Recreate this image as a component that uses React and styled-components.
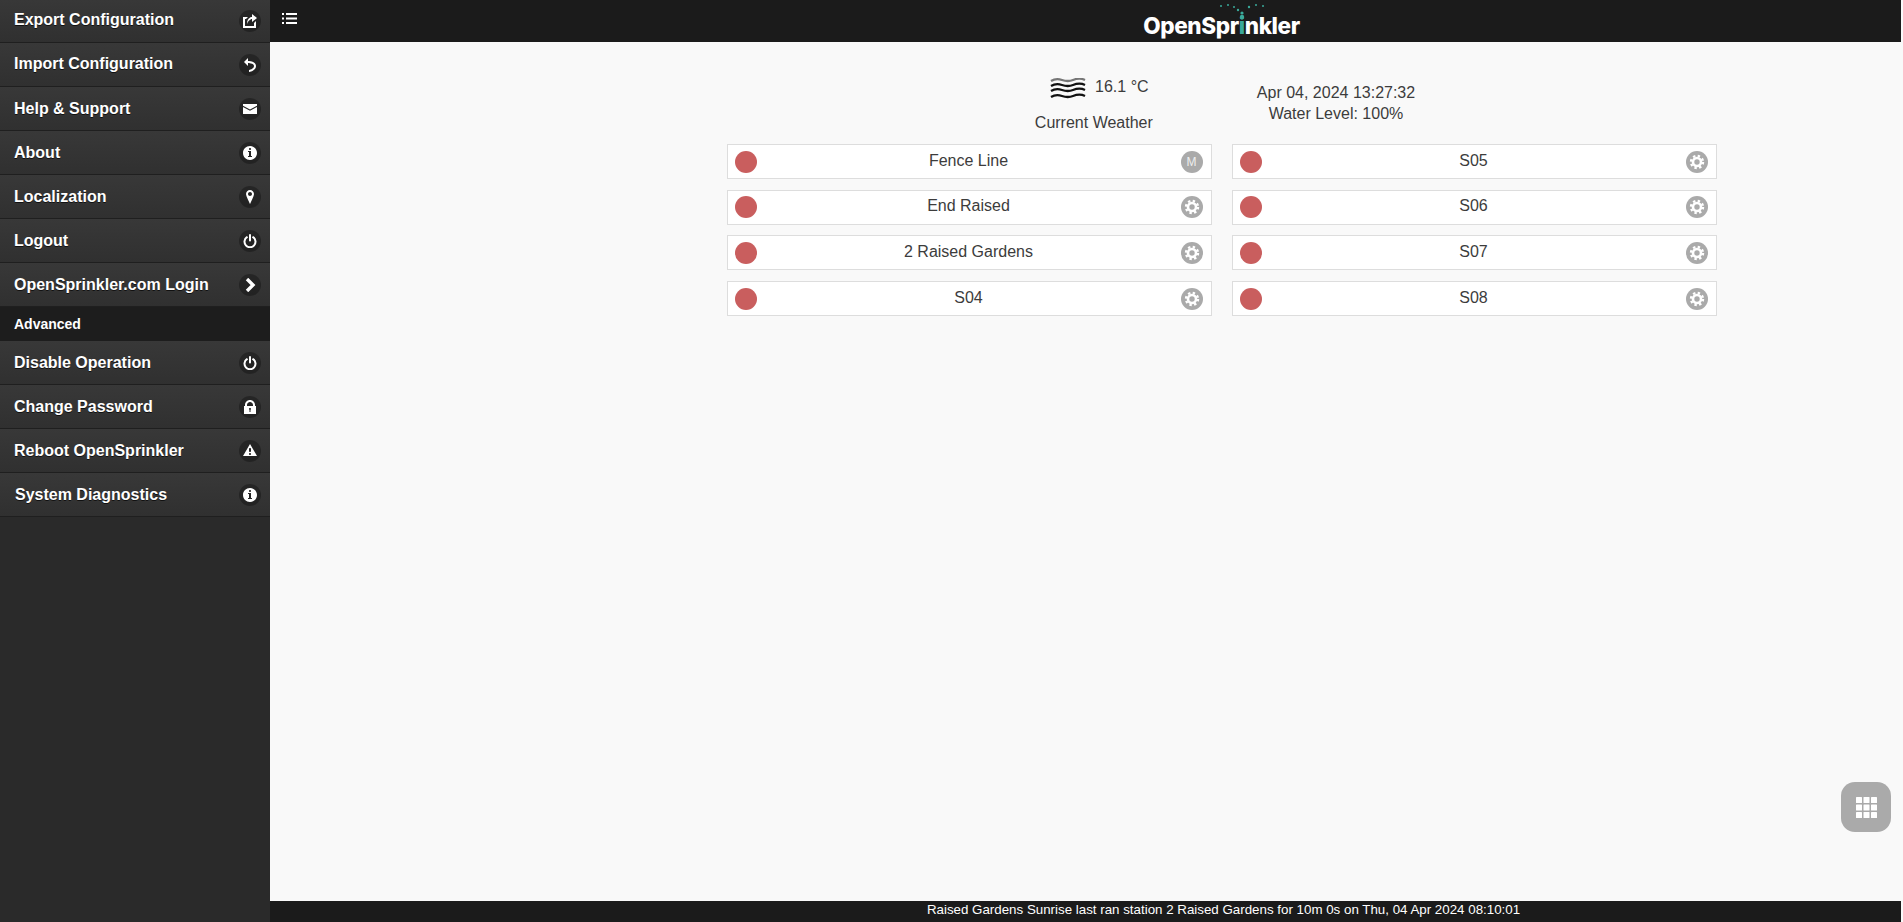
import React from "react";
import styled, { createGlobalStyle } from "styled-components";

const GlobalStyle = createGlobalStyle`
html, body {
    margin: 0;
    padding: 0;
    height: 100%;
    overflow: hidden;
    font-family: "Liberation Sans", Arial, sans-serif;
    background: #f9f9f9;
}
`;

// jQuery mobile style 14x14 glyphs
const glyphs = {
    action: <path d="M9 5v3l5-4-5-4v3S4 3 4 10c2-5 5-5 5-5zM11 12H2V5h1l2-2H0v11h13V7l-2 2v3z" />,
    back: <path d="M5 3V0L1 4l4 4V5s6 0 6 3-5 4-5 4v2s7-1 7-6c0-4-5-5-8-5z" />,
    mail: <path d="M0 3.75V2h14v1.75L7 7.5 0 3.75zM7 8.75 0 5v7h14V5L7 8.75z" />,
    info: <path d="M7 0C3.13 0 0 3.13 0 7s3.13 7 7 7 7-3.13 7-7-3.13-7-7-7zm0 2c.55 0 1 .45 1 1s-.45 1-1 1-1-.45-1-1 .45-1 1-1zm2 9H5v-1h1V6H5V5h3v5h1v1z" />,
    location: <path d="M7 0C4.79 0 3 1.79 3 4c0 2 4 10 4 10s4-8 4-10c0-2.21-1.79-4-4-4zm0 6c-1.1 0-2-.9-2-2s.9-2 2-2 2 .9 2 2-.9 2-2 2z" />,
    power: (
        <g fill="none" stroke="#fff" strokeWidth="2" strokeLinecap="round">
            <path d="M3.9 3.2a5.5 5.5 0 1 0 6.2 0" />
            <path d="M7 1v5.5" />
        </g>
    ),
    carat: <path fill="none" stroke="#fff" strokeWidth="3.4" d="M4 1 10 7l-6 6" />,
    lock: <path d="M12 6V5c0-2.76-2.24-5-5-5S2 2.24 2 5v1H1v8h12V6h-1zM7.5 9.85V12h-1V9.85C6.21 9.67 6 9.37 6 9c0-.55.45-1 1-1s1 .45 1 1c0 .37-.21.67-.5.85zM10 6H4V5c0-1.66 1.34-3 3-3s3 1.34 3 3v1z" />,
    alert: <path d="M7 0 0 12h14L7 0zm0 11c-.55 0-1-.45-1-1s.45-1 1-1 1 .45 1 1-.45 1-1 1zm0-3c-.55 0-1-.45-1-1V5c0-.55.45-1 1-1s1 .45 1 1v2c0 .55-.45 1-1 1z" />,
};

const Glyph = ({ name, size = 14 }) => (
    <svg width={size} height={size} viewBox="0 0 14 14" fill="#fff">
        {glyphs[name]}
    </svg>
);

const Gear = () => (
    <svg width="16" height="16" viewBox="0 0 16 16" fill="none" stroke="#fff">
        <circle cx="8" cy="8" r="4" strokeWidth="2.6" />
        <circle cx="8" cy="8" r="6" strokeWidth="2.4" strokeDasharray="2.36 2.35" />
    </svg>
);

const menuTop = [
    { label: "Export Configuration", icon: "action", lift: 1 },
    { label: "Import Configuration", icon: "back", lift: 1 },
    { label: "Help & Support", icon: "mail" },
    { label: "About", icon: "info" },
    { label: "Localization", icon: "location" },
    { label: "Logout", icon: "power" },
    { label: "OpenSprinkler.com Login", icon: "carat" },
];

const menuAdvanced = [
    { label: "Disable Operation", icon: "power" },
    { label: "Change Password", icon: "lock" },
    { label: "Reboot OpenSprinkler", icon: "alert" },
    { label: "System Diagnostics", icon: "info", indent: 15 },
];

const left = [
    { name: "Fence Line", manual: true },
    { name: "End Raised" },
    { name: "2 Raised Gardens" },
    { name: "S04" },
];
const right = [{ name: "S05" }, { name: "S06" }, { name: "S07" }, { name: "S08" }];

const sprayDots = [
    [122, 6, 1], [129, 5, 1], [135, 7, 1], [139, 10, 1.2], [143, 13, 1.6],
    [143, 17, 2.2], [150, 7, 1.2], [157, 5, 1], [164, 6, 1],
];

const App = () => {
    return (
        <Wrapper>
            <GlobalStyle />
            <Sidebar>
                <MenuList>
                    {menuTop.map((item, i) => (
                        <MenuItem key={item.label} $first={i === 0}>
                            <MenuLabel $lift={item.lift}>{item.label}</MenuLabel>
                            <MenuIcon><Glyph name={item.icon} /></MenuIcon>
                        </MenuItem>
                    ))}
                    <MenuDivider>Advanced</MenuDivider>
                    {menuAdvanced.map((item) => (
                        <MenuItem key={item.label}>
                            <MenuLabel $indent={item.indent}>{item.label}</MenuLabel>
                            <MenuIcon><Glyph name={item.icon} /></MenuIcon>
                        </MenuItem>
                    ))}
                </MenuList>
            </Sidebar>
            <Main>
                <Page>
                    <TopBar>
                        <ListButton>
                            <svg width="15" height="11" viewBox="0 0 15 11" fill="#fff">
                                <rect x="0" y="0" width="2" height="2" />
                                <rect x="4" y="0" width="11" height="2" />
                                <rect x="0" y="4.5" width="2" height="2" />
                                <rect x="4" y="4.5" width="11" height="2" />
                                <rect x="0" y="9" width="2" height="2" />
                                <rect x="4" y="9" width="11" height="2" />
                            </svg>
                        </ListButton>
                        <Logo>
                            <LogoSpray width="156" height="22" viewBox="0 0 156 22">
                                {sprayDots.map(([x, y, r]) => (
                                    <circle key={`${x}-${y}`} cx={x - 44} cy={y} r={r} fill="#3aa99a" />
                                ))}
                            </LogoSpray>
                            OpenSpr<LogoAccent>i</LogoAccent>nkler
                        </Logo>
                    </TopBar>
                    <Content>
                        <Status>
                            <Weather>
                                <WeatherTop>
                                    <svg width="36" height="22" viewBox="0 0 36 22" fill="none" stroke="#111" strokeWidth="2.3">
                                        <path stroke="#777" d="M1 3c5-3 8-2 11-1s6 2 11 0 8-2 12 0" />
                                        <path d="M1 8c5-3 8-2 11-1s6 2 11 0 8-2 12 0" />
                                        <path d="M1 13c5-3 8-2 11-1s6 2 11 0 8-2 12 0" />
                                        <path d="M1 19c5-3 8-2 11-1s6 2 11 0 8-2 12 0" />
                                    </svg>
                                    <WeatherTemp>16.1 °C</WeatherTemp>
                                </WeatherTop>
                                <WeatherLabel>Current Weather</WeatherLabel>
                            </Weather>
                            <Clock>
                                <div>Apr 04, 2024 13:27:32</div>
                                <div>Water Level: 100%</div>
                            </Clock>
                        </Status>
                        <Stations>
                            {[left, right].map((col, c) => (
                                <Column key={c}>
                                    {col.map((s) => (
                                        <Station key={s.name}>
                                            <StatusDot />
                                            <StationName>{s.name}</StationName>
                                            <StationButton>
                                                {s.manual ? <ManualMark>M</ManualMark> : <Gear />}
                                            </StationButton>
                                        </Station>
                                    ))}
                                </Column>
                            ))}
                        </Stations>
                    </Content>
                    <Footer>Raised Gardens Sunrise last ran station 2 Raised Gardens for 10m 0s on Thu, 04 Apr 2024 08:10:01</Footer>
                </Page>
            </Main>
            <GridButton>
                <svg width="21" height="21" viewBox="0 0 21 21" fill="#fff">
                    {[0, 7.5, 15].map((y) =>
                        [0, 7.5, 15].map((x) => <rect key={`${x}-${y}`} x={x} y={y} width="6" height="6" rx="0.5" />)
                    )}
                </svg>
            </GridButton>
        </Wrapper>
    );
};

const Wrapper = styled.div`
display: flex;
height: 100vh;
width: 100vw;
overflow: hidden;
`;

const Sidebar = styled.nav`
flex: 0 0 270px;
background: #2a2a2a;
`;

const MenuList = styled.div`
display: flex;
flex-direction: column;
`;

const MenuItem = styled.div`
box-sizing: border-box;
height: ${(p) => (p.$first ? "43px" : "44px")};
display: flex;
align-items: center;
justify-content: space-between;
padding: 0 9px 0 14px;
background: linear-gradient(#383838, #303030);
border-bottom: 1px solid #1f1f1f;
color: #fff;
`;

const MenuLabel = styled.span`
font-size: 16px;
font-weight: bold;
position: relative;
top: ${(p) => (p.$lift ? -p.$lift : 0)}px;
margin-left: ${(p) => (p.$indent ? p.$indent - 14 : 0)}px;
text-shadow: 0 1px 0 #111;
`;

const MenuIcon = styled.span`
width: 22px;
height: 22px;
border-radius: 50%;
background: rgba(0, 0, 0, 0.3);
display: flex;
align-items: center;
justify-content: center;
`;

const MenuDivider = styled.div`
box-sizing: border-box;
height: 34px;
display: flex;
align-items: center;
padding: 0 14px;
background: #1d1d1d;
color: #fff;
font-size: 14px;
font-weight: bold;
`;

const Main = styled.main`
flex: 1;
min-width: 0;
margin-right: 2px;
overflow: hidden;
`;

const Page = styled.div`
width: 1903px;
height: 100%;
display: flex;
flex-direction: column;
background: #f9f9f9;
`;

const TopBar = styled.header`
flex: 0 0 42px;
display: flex;
align-items: center;
justify-content: center;
position: relative;
background: #1b1b1b;
`;

const ListButton = styled.span`
position: absolute;
left: 12px;
top: 13px;
line-height: 0;
`;

const Logo = styled.div`
position: relative;
top: 4px;
font-family: "Inter", "Liberation Sans", sans-serif;
font-weight: 800;
font-size: 22.5px;
letter-spacing: -0.4px;
color: #fff;
`;

const LogoSpray = styled.svg`
position: absolute;
left: 0;
top: -11.5px;
`;

const LogoAccent = styled.span`
color: #3aa99a;
`;

const Content = styled.section`
flex: 1;
color: #3c3c3c;
font-size: 16px;
`;

const Status = styled.div`
display: flex;
justify-content: center;
gap: 104px;
padding: 35px 0 0 7px;
height: 67px;
`;

const Weather = styled.div`
display: flex;
flex-direction: column;
align-items: center;
`;

const WeatherTop = styled.div`
display: flex;
align-items: center;
gap: 9px;
height: 24px;
margin-left: 11px;
`;

const WeatherTemp = styled.span`
position: relative;
top: -2px;
`;

const WeatherLabel = styled.div`
margin-top: 11px;
line-height: 21px;
`;

const Clock = styled.div`
text-align: center;
line-height: 21px;
padding-top: 5px;
`;

const Stations = styled.div`
display: grid;
grid-template-columns: 485px 485px;
column-gap: 20px;
width: 990px;
margin: 0 auto;
`;

const Column = styled.div`
display: flex;
flex-direction: column;
gap: 10.7px;
`;

const Station = styled.div`
box-sizing: border-box;
height: 35px;
display: flex;
align-items: center;
justify-content: space-between;
padding: 0 8px 0 7px;
background: #fff;
border: 1px solid #ddd;
`;

const StatusDot = styled.span`
flex: 0 0 22px;
height: 22px;
border-radius: 50%;
background: #c95e5e;
`;

const StationName = styled.span`
flex: 1;
text-align: center;
position: relative;
top: -0.75px;
`;

const StationButton = styled.span`
flex: 0 0 22px;
height: 22px;
border-radius: 50%;
background: #aaa;
display: flex;
align-items: center;
justify-content: center;
`;

const ManualMark = styled.span`
color: #eee;
font-size: 12px;
`;

const Footer = styled.footer`
box-sizing: border-box;
flex: 0 0 21px;
padding-left: 4px;
background: #1b1b1b;
text-align: center;
color: #fff;
font-size: 13.33px;
line-height: 17px;
white-space: nowrap;
`;

const GridButton = styled.div`
position: fixed;
left: 1841px;
top: 782px;
width: 50px;
height: 50px;
border-radius: 14px;
background: #aaa;
display: flex;
align-items: center;
justify-content: center;
`;

export default App
